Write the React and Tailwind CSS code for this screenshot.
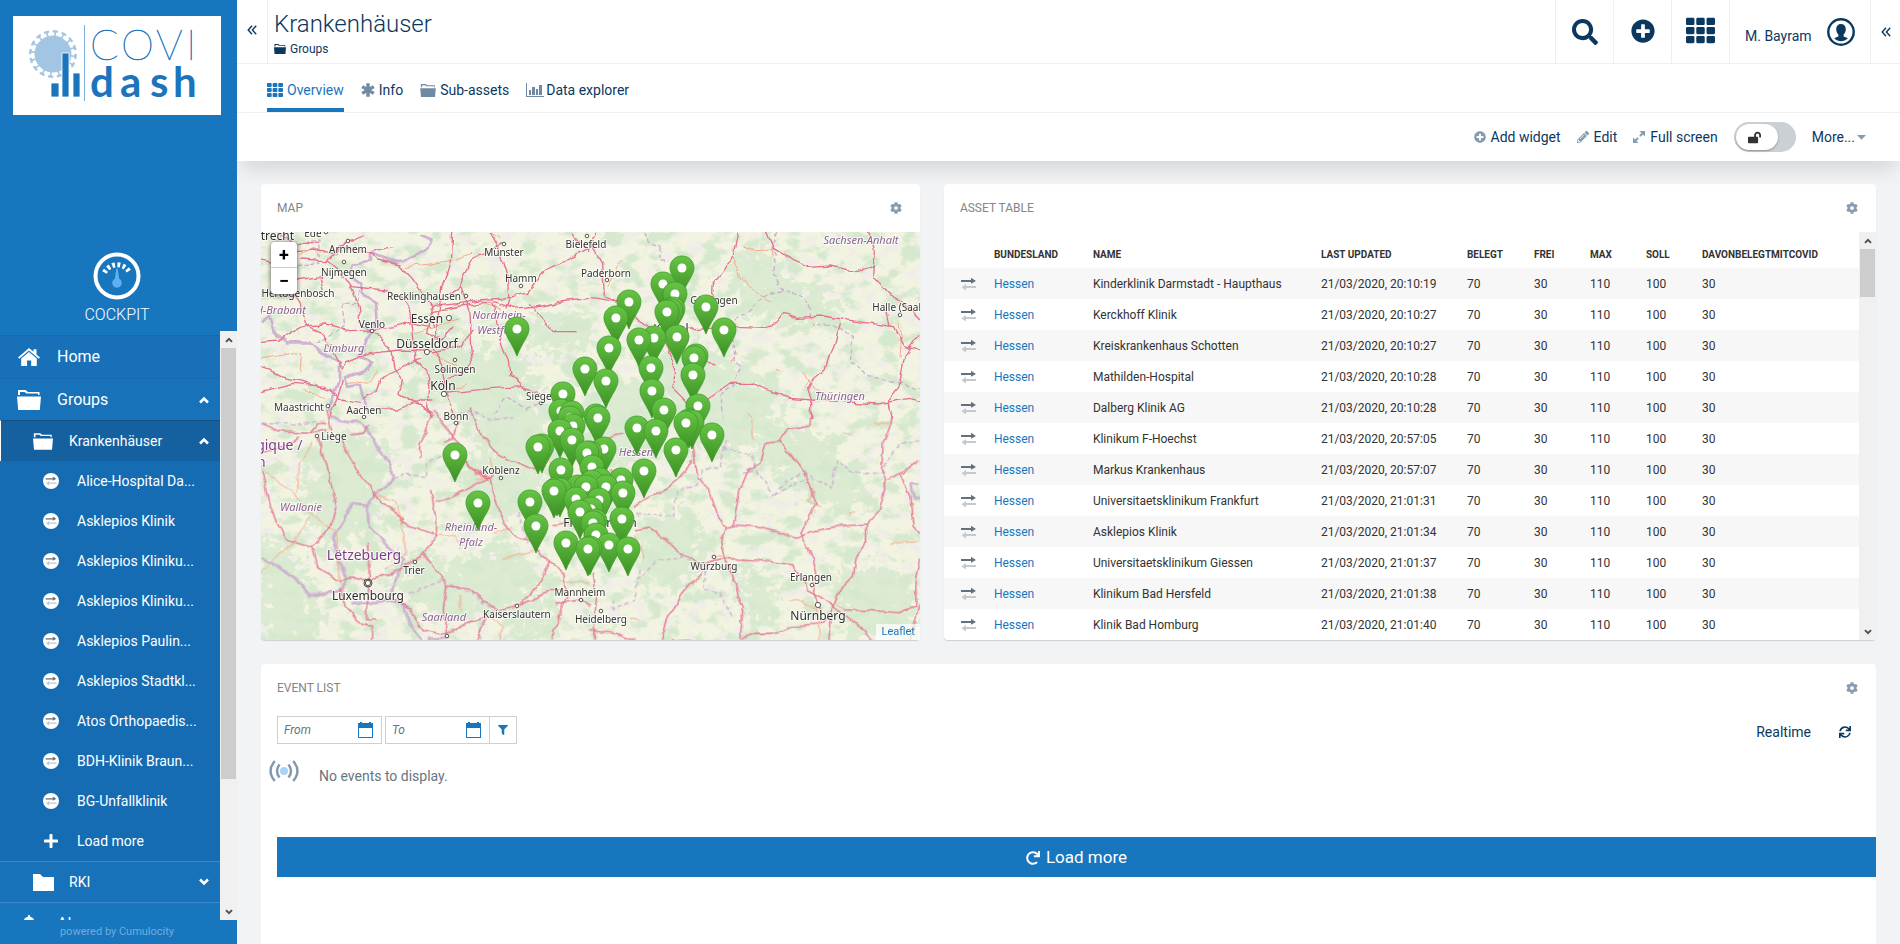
import React from 'react';
import {
  FaSearch, FaPlusCircle, FaTh, FaPencilAlt, FaCog, FaLockOpen,
  FaFilter, FaSync, FaRedo, FaPlus, FaBell,
} from 'react-icons/fa';

const sidebarItems = [
  'Alice-Hospital Da...', 'Asklepios Klinik', 'Asklepios Kliniku...', 'Asklepios Kliniku...', 'Asklepios Paulin...',
  'Asklepios Stadtkl...', 'Atos Orthopaedis...', 'BDH-Klinik Braun...', 'BG-Unfallklinik',
];

const assets = [
  ['Kinderklinik Darmstadt - Haupthaus', '20:10:19'],
  ['Kerckhoff Klinik', '20:10:27'],
  ['Kreiskrankenhaus Schotten', '20:10:27'],
  ['Mathilden-Hospital', '20:10:28'],
  ['Dalberg Klinik AG', '20:10:28'],
  ['Klinikum F-Hoechst', '20:57:05'],
  ['Markus Krankenhaus', '20:57:07'],
  ['Universitaetsklinikum Frankfurt', '21:01:31'],
  ['Asklepios Klinik', '21:01:34'],
  ['Universitaetsklinikum Giessen', '21:01:37'],
  ['Klinikum Bad Hersfeld', '21:01:38'],
  ['Klinik Bad Homburg', '21:01:40'],
];

/* ---------- icons ---------- */

function FolderOpen({ className }) {
  return (
    <svg viewBox="0 0 24 20" className={className} fill="currentColor" aria-hidden="true">
      <path d="M1 0h7.500l2.500 2H22.500v3H21V3.500H9.500L7.500 2H3v3H1z" />
      <path d="M0 6.500h24L22.800 20H1.200z" />
    </svg>
  );
}

function Folder({ className }) {
  return (
    <svg viewBox="0 0 21 17" className={className} fill="currentColor" aria-hidden="true">
      <path d="M0 0h7l3 3h11v14H0z" />
    </svg>
  );
}

function House({ className }) {
  return (
    <svg viewBox="0 0 22 18" className={className} fill="currentColor" aria-hidden="true">
      <path d="M11 0l4.500 3.800V1.200h3v5.200L22 9.400l-1.200 1.400L11 2.600 1.200 10.800 0 9.400z" />
      <path d="M11 4l7.800 6.400V18h-5.600v-5.500H9V18H3.200v-7.600z" />
    </svg>
  );
}

function Chevron({ className }) {
  return (
    <svg viewBox="0 0 10 8" className={className} fill="none" stroke="currentColor" strokeWidth="2.600" aria-hidden="true">
      <path d="M1 6.500l4-4 4 4" />
    </svg>
  );
}

function DoubleLeft({ className }) {
  return (
    <svg viewBox="0 0 10 10" className={className} fill="none" stroke="currentColor" strokeWidth="1.400" aria-hidden="true">
      <path d="M5 .700L1.200 5 5 9.300M9.200 .700L5.400 5l3.800 4.300" />
    </svg>
  );
}

function Asterisk({ className }) {
  return (
    <svg viewBox="0 0 14 14" className={className} stroke="currentColor" strokeWidth="3.400" aria-hidden="true">
      <path d="M7 .300v13.400M1.200 3.650l11.600 6.700M1.200 10.350l11.600-6.700" />
    </svg>
  );
}

function Expand({ className }) {
  return (
    <svg viewBox="0 0 12 12" className={className} aria-hidden="true">
      <path d="M6.500 0H12v5.500zM0 6.500L5.500 12H0z" fill="currentColor" />
      <path d="M10 2L7 5M2 10l3-3" stroke="currentColor" strokeWidth="2" />
    </svg>
  );
}

function Exchange({ className }) {
  return (
    <svg viewBox="0 0 15 14" className={className} aria-hidden="true">
      <path d="M0 3h10V.800L15 4l-5 2.800V5H0z" fill="#62717f" />
      <path d="M15 9H5V7L.500 10.200 5 13.400V11h10z" fill="#c3c9cf" />
    </svg>
  );
}

function BarChart({ className }) {
  return (
    <svg viewBox="0 0 18 14" className={className} fill="currentColor" aria-hidden="true">
      <path d="M0 0h1v13h17v1H0zM3 7h2v5H3zM6 4h3v8H6zM10 6h2v6h-2zM13 2h3v10h-3z" />
    </svg>
  );
}

function Calendar({ className }) {
  return (
    <svg viewBox="0 0 15 16" className={className} fill="currentColor" aria-hidden="true">
      <path fillRule="evenodd" d="M0 1h2V0h2v1h7V0h2v1h2v15H0zM1 6v9h13V6z" />
    </svg>
  );
}

function Cockpit({ className }) {
  return (
    <svg viewBox="0 0 48 48" className={className} aria-hidden="true">
      <circle cx="24" cy="24" r="21.500" fill="none" stroke="#fff" strokeWidth="4" />
      <path d="M11.500 20.500A14 14 0 0 1 36.500 20.500" fill="none" stroke="#fff" strokeWidth="5" strokeDasharray="2.800 2.460" />
      <path d="M23.400 16.500h1.200l1.600 10.200a4.800 4.800 0 1 1-4.400 0z" fill="#5fb0f2" />
    </svg>
  );
}

function UserCircle({ className }) {
  return (
    <svg viewBox="0 0 28 28" className={className} aria-hidden="true">
      <circle cx="14" cy="14" r="12.700" fill="none" stroke="#0b385f" strokeWidth="2.400" />
      <path d="M14 6c3 0 4.800 2 4.800 5.200 0 2.300-.900 4-2.200 5.200v2c1.800.700 3.600 1.200 4.200 2.200A9.500 9.500 0 0 1 14 23.200a9.500 9.500 0 0 1-6.800-2.600c.600-1 2.400-1.500 4.200-2.200v-2c-1.300-1.200-2.200-2.900-2.200-5.200C9.200 8 11 6 14 6z" fill="#0b385f" />
    </svg>
  );
}

function Pulse({ className }) {
  return (
    <svg viewBox="0 0 30 22" className={className} fill="none" stroke="#8298ad" strokeWidth="2.400" aria-hidden="true">
      <circle cx="15" cy="11" r="4" fill="#a9d3f7" stroke="none" />
      <path d="M10.500 4.500q-5 6.500 0 13M5.800 1q-8.500 10 0 20M19.500 4.500q5 6.500 0 13M24.200 1q8.500 10 0 20" />
    </svg>
  );
}

const spikes = Array.from({ length: 16 }, (_, i) => i * 22.5 + 6);

function Logo({ className }) {
  return (
    <svg viewBox="0 0 208 99" className={className} role="img" aria-label="COVI dash">
      <g fill="#a3c5e4" stroke="#a3c5e4">
        <circle cx="40" cy="38" r="18" />
        {spikes.map((a) => (
          <g key={a} transform={`rotate(${a} 40 38)`}>
            <path d="M40 21V15.500" strokeWidth="1.600" />
            <path d="M38.400 15.300h3.200" strokeWidth="2.400" strokeLinecap="round" />
          </g>
        ))}
      </g>
      <path d="M38 67h8v14h-8zM49 37h7v44h-7zM60 57h7v24h-7z" fill="#1a75bd" stroke="#fff" strokeWidth=".8" />
      <path d="M71.500 9v76" stroke="#7fb0da" strokeWidth="1" />
      <text x="77 108 143 173" y="44" fontFamily="Lato, sans-serif" fontWeight="100" fontSize="42" fill="#1a75bd" stroke="#1a75bd" strokeWidth=".5">COVI</text>
      <text x="77 107 137 160" y="81" fontFamily="Lato, sans-serif" fontWeight="700" fontSize="42" fill="#1a75bd">dash</text>
    </svg>
  );
}

/* ---------- scrollbar ---------- */

function Scrollbar({ thumb }) {
  return (
    <div className="flex w-[17px] shrink-0 flex-col items-center bg-[#f0f0f0] text-[#505050]" aria-hidden="true">
      <span className="flex h-[17px] items-center"><Chevron className="h-[6px] w-2" /></span>
      <span className={`w-[15px] bg-[#cdcdcd] ${thumb}`} />
      <span className="mt-auto flex h-[17px] items-center"><Chevron className="h-[6px] w-2 rotate-180" /></span>
    </div>
  );
}

/* ---------- map ---------- */

const tiles = [
  {
    id: 'nw', transform: 'translate(-1 -52) scale(.3333)',
    roads: [
      '578 156 575 230 560 280 545 320 540 372', '3 485 60 480 100 455 135 437 190 435 270 452 330 450 400 440 450 428 510 440',
      '120 240 200 245 210 230 240 200 330 220 350 240 420 255 455 290 490 340 515 380 520 440',
      '205 240 230 260 270 320 295 380 300 430 335 450 375 490 400 530 405 570 425 600',
      '110 215 165 210 230 215 260 185 310 165', '135 437 120 370 100 340 80 300 60 250 3 240',
      '270 320 380 330 430 360 450 400 465 540 480 535', '515 380 600 370 660 360 750 352 800 340 830 300 860 270 900 250 945 230 990 205',
      '690 156 715 200 745 300 750 352 738 385', '570 340 600 320 610 290 640 240 730 190',
      '515 395 600 378 700 365 760 385 850 375 920 360 990 353', '600 320 630 400 635 500 640 540 625 570 600 590 560 595 545 620',
      '700 370 720 480 745 540 750 585 790 620 850 645', '555 640 600 635 700 625 790 620',
      '465 540 500 570 510 620 500 680 520 720', '330 520 420 510 520 515 600 500 640 450', '3 560 60 590 150 610 220 630 240 660 300 670',
      '3 635 100 610 200 620', '250 600 240 640 210 720', '330 520 260 545 250 570 190 460 135 437', '310 655 350 630 360 600 420 570 465 540',
      '360 690 420 690 480 660 520 660', '430 600 420 640 520 700', '930 160 960 190 990 215',
      '540 372 520 500 540 530 560 640 585 700', '805 370 830 400 880 455 950 455', '110 300 180 290 190 330', '515 380 500 460 545 480 580 440',
      '60 160 100 185 180 190', '330 215 400 200',
    ],
    minor: ['430 260 490 255 580 240 640 220', '3 540 60 530 125 515 120 575', '130 630 170 640 200 660', '265 610 330 605 350 570', '690 156 720 180', '460 460 520 440 600 420', '660 360 720 385', '120 225 165 205 180 225', '560 640 620 610', '510 510 550 540 590 560'],
    borders: [
      '480 165 515 180 500 210 440 240 400 245 330 220 330 245 275 255 270 290 300 310 310 340 345 370 350 420 320 480 300 530 335 545 310 575 255 595 265 620 300 615 310 655 325 690',
      '3 430 30 410 45 460 80 490 150 490 200 530 240 545 240 600 225 640 210 680 215 720',
    ],
    states: ['300 330 290 370 245 370 255 440 200 475 160 490', '110 190 180 180 180 250 110 260', '700 700 740 650 800 690 850 670'],
  },
  {
    id: 'ne', transform: 'translate(329 -52) scale(.3333)',
    roads: [
      '440 156 425 235 400 275 370 310 368 340 385 360', '530 156 550 205 600 235 660 262 720 258 800 275 850 262',
      '835 156 853 210 848 290 900 345 935 365 990 420', '270 450 385 440 460 440 520 442 560 430 585 400 620 412 700 408 800 425 910 440 945 500 990 512',
      '990 460 940 530 925 620 893 660 905 720', '750 425 730 490 705 570 650 620 665 660 665 720',
      '310 700 350 660 420 610 490 610 530 630 600 655 665 660 760 665 860 672 960 655 990 665',
      '0 190 35 250 40 350 100 370 160 430 210 470 235 500 250 540 250 620 290 660 310 700', '0 352 60 362 100 370', '300 530 340 545 380 552', '890 390 900 440', '20 156 0 200',
    ],
    minor: ['430 235 450 290 490 330 545 370', '455 195 500 212 545 210 550 230', '645 580 660 610 690 630', '560 565 575 570', '470 700 490 720', '540 180 550 205 530 215', '50 320 100 240', '420 550 440 520', '660 600 640 620', '920 430 935 470 930 530'],
    borders: [],
    states: ['165 160 175 190 210 200 210 240 240 240', '560 156 545 200 560 230 550 280 575 330 640 350 670 430 740 440 790 470 780 550 850 590 920 610 990 625', '575 330 510 360 470 400 440 410 430 480 430 550 450 560 430 610 390 650 400 720'],
  },
  {
    id: 'sw', transform: 'translate(-1 178) scale(.3333)',
    roads: [
      '175 85 200 160 215 230 230 290 210 350 155 410', '3 180 30 290 75 385 155 410 170 470 240 510 330 505 400 490 480 440 530 380 530 320 515 240',
      '3 40 60 65 150 70 200 60', '200 0 215 60', '240 80 260 130 300 190 340 255 400 300 430 340 530 375',
      '490 430 530 480 560 525 620 530 660 560 710 600', '235 540 290 630 335 650 335 690', '320 400 325 500 320 580 320 630 350 630',
      '400 570 450 600 490 660 560 675 620 640 680 625', '630 0 660 70 700 120 770 160 830 180', '500 0 520 20 480 100 475 150',
      '520 0 560 60 600 100 635 180 690 205 710 280 730 340 770 380 830 400', '530 280 590 255 650 220 700 200',
      '830 420 865 450 840 520 800 560 780 585', '865 450 915 490 920 560 890 640 880 690', '710 600 780 585 860 545 920 545',
      '270 75 310 70 330 45', '560 525 550 600 560 675', '680 625 650 690', '150 70 175 40 200 40', '3 125 80 110 120 80', '880 350 960 340 990 350', '890 580 960 570 990 590', '620 150 640 190 690 205', '555 100 580 90 590 30',
    ],
    minor: ['3 170 100 250 150 310 230 370 240 500', '3 490 40 440 100 400 150 320', '430 340 440 430 380 480', '110 250 115 160 160 100', '530 375 580 380 600 400', '730 445 830 420', '340 255 400 270 430 340', '700 370 760 350', '600 555 605 600', '240 500 250 560', '690 620 730 650 720 690', '690 140 700 200 640 210', '860 140 880 180', '900 510 990 520'],
    borders: [
      '215 25 300 40 325 60 350 110 385 150 400 210 340 255 325 285 280 280 220 380 240 450 260 510 240 545 150 560 110 510 40 460 3 440',
      '325 285 330 350 380 410 430 450 400 540 380 570 430 590 450 640 480 690', '280 580 330 575 380 570', '500 690 570 685',
    ],
    states: ['400 210 440 190 500 200 500 160 540 140 590 110', '450 550 550 510 640 550 700 600 660 650 660 690', '3 40 100 45 200 30', '600 10 660 10 700 30 760 20', '780 310 790 340 800 400'],
  },
  {
    id: 'se', transform: 'translate(329 178) scale(.3333)',
    roads: [
      '665 0 660 45 600 55 570 95 525 100 510 160 475 180 450 240 430 345 410 350', '570 95 600 130 640 185 660 230 675 280 630 370 640 385',
      '430 345 500 350 560 365 620 385 660 365 740 350 830 342',
      '905 0 900 50 880 100 875 180 885 240 870 300 830 342 830 400 800 440 790 500 750 540 725 600 720 690',
      '300 0 315 150 320 200 355 240 380 310 410 350 390 390 405 445 430 500 440 550 460 590 450 690',
      '130 360 180 352 230 390 280 440 330 460 405 445 500 450 610 465 640 510 650 540 690 560 730 590 800 640 845 690',
      '340 480 280 550 235 620 215 690', '640 385 665 440 680 490 670 550 690 600', '765 600 850 602 930 608 975 590 975 520 990 440',
      '885 210 930 190 990 150', '930 190 960 260 970 350 990 370', '455 688 500 670 560 670 600 650 690 645 750 605',
      '130 290 170 265 220 240 270 200 310 150', '0 660 60 665 140 690', '10 490 20 560 10 690', '250 690 300 688', '50 90 100 70', '960 690 990 560', '60 180 110 180',
    ],
    minor: ['650 220 670 240 655 275 690 290', '760 70 790 75', '600 570 640 575 680 600 690 690', '780 310 800 305', '130 370 150 410 160 450', '485 30 495 85', '120 630 150 635', '365 435 410 440', '900 400 980 390', '850 40 900 40', '770 600 740 580', '930 610 960 590', '650 400 660 430'],
    borders: ['990 220 965 220 970 260 990 270'],
    states: ['400 115 480 130 500 180 550 250 590 210 640 190 730 235 740 150 790 190 870 185 930 100 990 90', '140 310 250 320 260 250 320 230 340 180 390 170 410 90', '140 510 200 450 280 445 350 480 340 540 400 560 430 620', '70 570 70 600 130 570 150 470', '490 180 460 190', '550 250 650 210'],
  },
];

const forests = [
  'M150 120l40-20 30 20 30-10 20 30-10 50-50 10-40-40z', 'M478 12l30 8 20 30 45 12 4 30-40 8-50-18-20-40z', 'M60 205l50-10 20 40-10 50-40 30-40-30z',
  'M130 320l60 10 60-20 30 30-30 40-70 10-50-40z', 'M410 110l50 10 60 40-20 60-60-10-50-60z', 'M225 145l60 20 10 60-30 30-50-50z',
  'M250 380l30-12 15 20-10 20h-40z', 'M335 150l50 0 10 60-40 30-30-40z', 'M380 290l50-20 20 60-40 30-30-20z', 'M490 190l70 10 50 60-30 20-80-50z', 'M470 345l30-10 20 40-30 20z',
  'M580 330l60 10 19 30v36h-80z', 'M205 220l60 10 20 40-50 20-40-30z', 'M0 300l40 30 20 50-10 28H0z', 'M260 80l60 5 20 20-30 20-40-10z',
];

const labels = [
  [12, 3, 'Utrecht', 'lg'], [52, 1, 'Ede'], [87, 17, 'Arnhem'], [83, 40, 'Nijmegen'], [32, 61, "'s-Hertogenbosch"], [8, 77, 'Noord-Brabant', 'state'],
  [111, 92, 'Venlo'], [83, 115, 'Limburg', 'state'], [163, 64, 'Recklinghausen'], [166, 86, 'Essen', 'lg'], [166, 111, 'Düsseldorf', 'lg'],
  [194, 137, 'Solingen'], [182, 153, 'Köln', 'lg'], [281, 164, 'Siegen'], [38, 175, 'Maastricht'], [103, 178, 'Aachen'], [195, 184, 'Bonn'],
  [243, 20, 'Münster'], [260, 46, 'Hamm'], [238, 82, 'Nordrhein-', 'state'], [240, 97, 'Westfalen', 'state'], [325, 12, 'Bielefeld'], [345, 41, 'Paderborn'],
  [600, 7, 'Sachsen-Anhalt', 'state'], [453, 68, 'Göttingen'], [410, 96, 'Kassel', 'lg'], [640, 75, 'Halle (Saale)'], [579, 163, 'Thüringen', 'state'], [680, 95, 'Leipzig', 'lg'],
  [73, 204, 'Liège'], [8, 212, 'Belgique /', 'country'], [-20, 229, 'Belgien', 'country'], [40, 274, 'Wallonie', 'state'], [240, 238, 'Koblenz'], [210, 294, 'Rheinland-', 'state'], [210, 309, 'Pfalz', 'state'],
  [103, 322, 'Lëtzebuerg', 'country'], [153, 338, 'Trier'], [107, 363, 'Luxembourg', 'lg'], [183, 384, 'Saarland', 'state'], [256, 382, 'Kaiserslautern'],
  [319, 360, 'Mannheim'], [340, 387, 'Heidelberg'], [375, 219, 'Hessen', 'state'], [339, 290, 'Frankfurt am', 'lg'], [453, 334, 'Würzburg'], [550, 345, 'Erlangen'], [557, 383, 'Nürnberg', 'lg'],
];

const labelStyle = {
  md: { fontSize: 10, fill: '#333' },
  lg: { fontSize: 12, fill: '#2d2d2d' },
  state: { fontSize: 11, fill: '#8d6191', fontStyle: 'italic' },
  country: { fontSize: 14, fill: '#7f3c8a' },
};

const towns = [
  [65, 0], [87, 9], [83, 30], [205, 64], [188, 86, 1], [111, 99], [166, 120, 1], [194, 128], [183, 162, 1], [280, 171], [67, 174], [103, 185], [195, 191],
  [243, 12], [260, 54], [326, 4], [346, 48], [639, 83], [56, 204], [240, 246], [154, 330], [107, 351, 1], [256, 374], [320, 368], [340, 379], [453, 325], [551, 353], [557, 373, 1], [186, 404],
];

const pins = [
  [421, 36], [402, 52], [414, 62], [412, 77], [410, 79], [406, 80], [368, 70], [445, 75], [355, 86], [463, 98], [393, 106], [378, 108], [416, 105], [348, 116],
  [435, 124], [433, 126], [390, 136], [432, 143], [324, 137], [345, 149], [391, 159], [437, 174], [403, 178], [335, 184], [337, 186], [376, 196], [395, 199],
  [431, 190], [428, 189], [425, 191], [451, 203], [415, 218], [383, 239], [343, 217], [329, 221], [331, 235], [360, 248], [345, 255], [362, 261], [338, 268], [361, 287],
  [334, 289], [332, 291], [335, 303], [348, 313], [367, 317], [329, 316], [327, 317], [256, 97], [302, 162], [300, 179], [311, 181], [309, 186], [194, 223], [217, 271],
  [281, 214], [277, 215], [299, 199], [312, 194], [311, 208], [326, 221], [300, 238], [317, 255], [299, 258], [296, 257], [293, 259], [269, 270], [275, 294], [315, 267],
  [319, 280], [305, 311], [331, 250], [325, 255], [339, 248], [330, 277],
].sort((a, b) => a[1] - b[1]);

const toPath = (points) => 'M' + points;

function RegionMap() {
  return (
    <svg viewBox="0 0 659 408" preserveAspectRatio="xMidYMid slice" className="absolute inset-0 size-full" fontFamily="'Noto Sans', sans-serif" role="img" aria-label="Map of hospitals">
      <defs>
        <linearGradient id="pinFill" x1="0" x2="0" y1="0" y2="1">
          <stop offset="0" stopColor="#67c545" />
          <stop offset="1" stopColor="#3b8f23" />
        </linearGradient>
        <filter id="woods" x="0" y="0" width="100%" height="100%" colorInterpolationFilters="sRGB">
          <feTurbulence type="fractalNoise" baseFrequency=".05 .07" numOctaves="6" seed="8" />
          <feColorMatrix values="0 0 0 0 .84  0 0 0 0 .915  0 0 0 0 .81  6 0 0 0 -3" />
        </filter>
        <filter id="fields" x="0" y="0" width="100%" height="100%" colorInterpolationFilters="sRGB">
          <feTurbulence type="fractalNoise" baseFrequency=".07 .09" numOctaves="4" seed="21" />
          <feColorMatrix values="0 0 0 0 .94  0 0 0 0 .93  0 0 0 0 .91  0 5 0 0 -2.500" />
        </filter>
        <filter id="rough" x="-5%" y="-5%" width="110%" height="110%">
          <feTurbulence type="fractalNoise" baseFrequency=".06" numOctaves="3" seed="3" />
          <feDisplacementMap in="SourceGraphic" scale="7" xChannelSelector="R" yChannelSelector="G" />
        </filter>
        <filter id="roughWoods" x="-10%" y="-10%" width="120%" height="120%">
          <feTurbulence type="fractalNoise" baseFrequency=".1" numOctaves="5" seed="5" />
          <feDisplacementMap in="SourceGraphic" scale="60" xChannelSelector="R" yChannelSelector="G" />
        </filter>
        <g id="pin">
          <path d="M0-12C7-12 12-7 12 0c0 7-7 14-12 27C-5 14-12 7-12 0-12-7-7-12 0-12z" fill="url(#pinFill)" stroke="#3f9a2b" strokeWidth=".8" />
          <circle r="4.500" fill="#fff" />
        </g>
      </defs>
      <rect width="659" height="408" fill="#f2f3e0" />
      <rect width="659" height="408" filter="url(#fields)" />
      <g fill="#cfe7c8" opacity=".6" filter="url(#roughWoods)">
        {forests.map((d) => <path key={d} d={d} />)}
      </g>
      <rect width="659" height="408" filter="url(#woods)" />
      <g fill="none" strokeLinejoin="round" filter="url(#rough)">
        {tiles.map((tile) => (
          <g key={tile.id} transform={tile.transform}>
            <g stroke="#cba6cf" strokeWidth="8" opacity=".85">{tile.borders.map((p) => <path key={p} d={toPath(p)} />)}</g>
            <g stroke="#cbb0cf" strokeWidth="4" strokeDasharray="14 8">{tile.states.map((p) => <path key={p} d={toPath(p)} />)}</g>
            <g stroke="#f7a98c" strokeWidth="3">{tile.minor.map((p) => <path key={p} d={toPath(p)} />)}</g>
            <g stroke="#e6718f" strokeWidth="4">{tile.roads.map((p) => <path key={p} d={toPath(p)} />)}</g>
          </g>
        ))}
      </g>
      <g fill="#fff" stroke="#555">
        {towns.map(([x, y, big]) => <circle key={`${x}-${y}`} cx={x} cy={y} r={big ? 2.6 : 1.8} />)}
      </g>
      <circle cx="107" cy="351" r="4" fill="none" stroke="#444" />
      <g textAnchor="middle" dominantBaseline="central" paintOrder="stroke" stroke="#fff" strokeOpacity=".7" strokeWidth="2">
        {labels.map(([x, y, text, kind = 'md']) => <text key={text} x={x} y={y} {...labelStyle[kind]}>{text}</text>)}
      </g>
      {pins.map(([x, y]) => <use key={`${x}-${y}`} href="#pin" x={x} y={y} />)}
    </svg>
  );
}

/* ---------- layout pieces ---------- */

function Sidebar() {
  return (
    <aside className="relative z-20 flex w-[237px] shrink-0 flex-col bg-[#1876bf] text-white">
      <Logo className="mx-[13px] mt-4 h-[99px] w-[208px] bg-white" />
      <div className="mt-[137px] flex h-[79px] w-[234px] flex-col items-center">
        <Cockpit className="size-12" />
        <span className="mt-[3px] text-base font-light">COCKPIT</span>
      </div>
      <div className="flex min-h-0 flex-1">
        <nav className="min-w-0 flex-1 overflow-hidden pt-1">
          <a href="#home" className="flex h-[43px] items-center border-t border-[#1669ab] bg-[#1871b8] pl-[18px]">
            <House className="h-[18px] w-[22px]" />
            <span className="ml-[17px] text-base">Home</span>
          </a>
          <a href="#groups" className="flex h-[42px] items-center border-t border-[#1669ab] bg-[#1872b9] pr-[11px] pl-[17px]">
            <FolderOpen className="h-5 w-6" />
            <span className="ml-4 flex-1 text-base">Groups</span>
            <Chevron className="h-2 w-[10px]" />
          </a>
          <a href="#krankenhaeuser" className="flex h-[41px] items-center border-t border-l border-t-[#114f85] border-l-white bg-[#1561a0] pr-[11px] pl-8 text-sm">
            <FolderOpen className="h-[17px] w-5" />
            <span className="ml-4 flex-1">Krankenhäuser</span>
            <Chevron className="h-2 w-[10px]" />
          </a>
          <ul className="bg-[#166cb3] text-sm">
            {sidebarItems.map((name, i) => (
              <li key={i}>
                <a href="#asset" className="flex h-10 items-center pl-[43px]">
                  <span className="flex size-4 items-center justify-center rounded-full bg-white"><Exchange className="h-[10px] w-3" /></span>
                  <span className="ml-[18px]">{name}</span>
                </a>
              </li>
            ))}
            <li>
              <button className="flex h-10 w-full items-center pl-[43px]">
                <FaPlus className="size-4" />
                <span className="ml-[18px]">Load more</span>
              </button>
            </li>
          </ul>
          <a href="#rki" className="flex h-[41px] items-center border-t border-[#3b8bcc] bg-[#1872b9] pr-[11px] pl-[33px] text-sm">
            <Folder className="h-[17px] w-[21px]" />
            <span className="ml-[15px] flex-1">RKI</span>
            <Chevron className="h-2 w-[10px] rotate-180" />
          </a>
          <a href="#alarms" className="flex h-[43px] items-center border-t border-[#3b8bcc] bg-[#1876bf] pl-5">
            <FaBell className="size-[18px]" />
            <span className="ml-[19px] text-base">Alarms</span>
          </a>
        </nav>
        <Scrollbar thumb="h-[431px]" />
      </div>
      <footer className="flex h-6 w-[234px] items-center justify-center text-[11px] text-[#70addb]">powered by Cumulocity</footer>
    </aside>
  );
}

function Header() {
  return (
    <header className="flex h-16 border-b border-[#eeeff0] text-[#0b385f]">
      <button aria-label="Collapse navigator" className="flex w-[31px] items-center justify-center border-r border-[#eeeff0] pb-1"><DoubleLeft className="size-[10px]" /></button>
      <div className="flex flex-1 flex-col pt-2 pl-[6px]">
        <h1 className="text-2xl leading-8 font-light">Krankenhäuser</h1>
        <a href="#groups" className="flex items-center gap-1 text-xs leading-[18px]"><FolderOpen className="h-[10px] w-3" />Groups</a>
      </div>
      <button aria-label="Search" className="flex w-[58px] items-center justify-center border-l border-[#eeeff0]"><FaSearch className="size-[26px]" /></button>
      <button aria-label="Add" className="flex w-[58px] items-center justify-center border-l border-[#eeeff0] pb-[2px]"><FaPlusCircle className="size-6" /></button>
      <button aria-label="Applications" className="flex w-[58px] items-center justify-center border-l border-[#eeeff0] pb-[2px]"><FaTh className="size-[29px]" /></button>
      <button className="flex w-[141px] items-center justify-between border-l border-[#eeeff0] pr-[15px] pl-[15px] text-sm">
        <span className="pt-2">M. Bayram</span>
        <UserCircle className="size-7" />
      </button>
      <button aria-label="Open drawer" className="flex w-[30px] items-center justify-center border-l border-[#eeeff0]"><DoubleLeft className="size-[10px]" /></button>
    </header>
  );
}

function Tabs() {
  return (
    <nav className="flex h-[49px] gap-[17px] border-b border-[#eeeff0] pl-[30px] text-sm text-[#0b385f]">
      <a href="#overview" className="flex items-center gap-1 border-b-4 border-[#1876bf] pt-2 text-[#1876bf]"><FaTh className="size-4" />Overview</a>
      <a href="#info" className="flex items-center gap-1 pt-1"><Asterisk className="size-[14px] text-[#6f8aa3]" />Info</a>
      <a href="#sub-assets" className="flex items-center gap-1 pt-1"><FolderOpen className="h-[13px] w-4 text-[#6f8aa3]" />Sub-assets</a>
      <a href="#data" className="flex items-center gap-[2px] pt-1"><BarChart className="h-[14px] w-[18px] text-[#6f8aa3]" />Data explorer</a>
    </nav>
  );
}

function ActionBar() {
  return (
    <div className="relative z-10 flex h-12 items-center justify-end bg-white pr-[34px] text-sm text-[#0b385f] shadow-[0_12px_20px_-4px_rgba(0,0,0,0.12)]">
      <button className="mr-4 flex items-center gap-[5px]"><FaPlusCircle className="size-3 text-[#869db1]" />Add widget</button>
      <button className="mr-4 flex items-center gap-[5px]"><FaPencilAlt className="size-3 text-[#869db1]" />Edit</button>
      <button className="mr-4 flex items-center gap-[5px]"><Expand className="size-3 text-[#869db1]" />Full screen</button>
      <label className="mr-4 flex h-[30px] w-[62px] items-center rounded-full bg-[#cbd0d5] p-[2px]">
        <input type="checkbox" aria-label="Lock dashboard" className="sr-only" />
        <span className="flex h-[26px] w-[42px] items-center justify-center rounded-full bg-white pr-[5px] text-[#333] shadow-[0_1px_2px_rgba(0,0,0,0.3)]"><FaLockOpen className="size-[13px]" /></span>
      </label>
      <button className="flex items-center gap-[2px]">
        More...
        <svg viewBox="0 0 9 5" className="h-[5px] w-[9px] text-[#869db1]" fill="currentColor" aria-hidden="true"><path d="M0 0h9L4.500 4.800z" /></svg>
      </button>
    </div>
  );
}

function CardHeader({ title }) {
  return (
    <div className="flex h-12 shrink-0 items-center justify-between pr-[18px] pl-4">
      <h2 className="text-xs text-[#858585]">{title}</h2>
      <button aria-label={`${title} settings`}><FaCog className="size-3 text-[#869db1]" /></button>
    </div>
  );
}

function MapCard() {
  return (
    <section className="col-span-5 flex flex-col rounded-sm bg-white shadow-[0_1px_1px_rgba(0,0,0,0.15)]">
      <CardHeader title="MAP" />
      <div className="relative h-[408px] overflow-hidden">
        <RegionMap />
        <div className="absolute top-[10px] left-[10px] flex w-[26px] flex-col rounded-[4px] bg-white text-lg leading-[26px] font-bold text-black shadow-[0_1px_5px_rgba(0,0,0,0.65)]">
          <button aria-label="Zoom in" className="flex h-[26px] items-center justify-center border-b border-[#ccc]">+</button>
          <button aria-label="Zoom out" className="flex h-[26px] items-center justify-center">−</button>
        </div>
        <a href="#leaflet" className="absolute right-0 bottom-0 bg-white/70 px-[5px] text-[11px] leading-4 text-[#1876bf]">Leaflet</a>
      </div>
    </section>
  );
}

function AssetCard() {
  const cell = 'p-0 text-left whitespace-nowrap';
  return (
    <section className="col-span-7 flex flex-col rounded-sm bg-white shadow-[0_1px_1px_rgba(0,0,0,0.15)]">
      <CardHeader title="ASSET TABLE" />
      <div className="flex h-[408px] overflow-hidden">
        <div className="min-w-0 flex-1 overflow-hidden">
          <table className="w-full table-fixed border-collapse text-xs text-[#333]">
            <colgroup>
              <col className="w-[50px]" /><col className="w-[99px]" /><col className="w-[228px]" /><col className="w-[146px]" />
              <col className="w-[67px]" /><col className="w-[56px]" /><col className="w-[56px]" /><col className="w-[56px]" /><col />
            </colgroup>
            <thead>
              <tr className="h-9 text-[10px]">
                <th className={cell}><span className="sr-only">Status</span></th>
                {['BUNDESLAND', 'NAME', 'LAST UPDATED', 'BELEGT', 'FREI', 'MAX', 'SOLL', 'DAVONBELEGTMITCOVID'].map((h) => (
                  <th key={h} className={`${cell} pt-[10px] font-bold`}>{h}</th>
                ))}
              </tr>
            </thead>
            <tbody>
              {assets.map(([name, time]) => (
                <tr key={name} className="h-[31px] odd:bg-[#f7f7f7]">
                  <td className="p-0 pl-[17px]"><Exchange className="h-[14px] w-[15px]" /></td>
                  <td className={cell}><a href="#hessen" className="text-[#1876bf]">Hessen</a></td>
                  <td className={cell}>{name}</td>
                  <td className={cell}>21/03/2020, {time}</td>
                  <td className={cell}>70</td>
                  <td className={cell}>30</td>
                  <td className={cell}>110</td>
                  <td className={cell}>100</td>
                  <td className={cell}>30</td>
                </tr>
              ))}
            </tbody>
          </table>
        </div>
        <Scrollbar thumb="h-12" />
      </div>
    </section>
  );
}

function DateField({ label }) {
  return (
    <div className="flex h-7 w-[105px] items-center border border-[#ccd0d4] pr-2 pl-[6px]">
      <input type="text" aria-label={label} placeholder={label} className="min-w-0 flex-1 text-xs italic outline-none placeholder:text-[#66757f]" />
      <button aria-label={`Pick ${label} date`} className="text-[#1876bf]"><Calendar className="h-4 w-[15px]" /></button>
    </div>
  );
}

function EventCard() {
  return (
    <section className="mt-6 flex flex-1 flex-col rounded-t-sm bg-white">
      <CardHeader title="EVENT LIST" />
      <div className="flex items-start pt-1 pl-4">
        <DateField label="From" />
        <div className="ml-[3px] flex">
          <DateField label="To" />
          <button aria-label="Filter" className="-ml-px flex h-7 w-7 items-center justify-center border border-[#ccd0d4] text-[#1876bf]"><FaFilter className="size-[10px]" /></button>
        </div>
        <div className="ml-auto flex items-center gap-7 pt-[6px] pr-[25px] text-sm text-[#0b385f]">
          <span>Realtime</span>
          <button aria-label="Refresh"><FaSync className="size-3" /></button>
        </div>
      </div>
      <div className="mt-4 flex items-start pl-2">
        <Pulse className="h-[22px] w-[30px]" />
        <p className="ml-5 pt-[6px] text-sm text-[#66757f]">No events to display.</p>
      </div>
      <button className="mt-[51px] ml-4 flex h-10 items-center justify-center gap-[6px] bg-[#1876bf] pt-[2px] text-[17px] text-white"><FaRedo className="size-[14px]" />Load more</button>
    </section>
  );
}

export default function App() {
  return (
    <div className="flex h-screen overflow-hidden bg-[#f1f3f5] font-['Roboto',sans-serif]">
      <Sidebar />
      <main className="flex min-w-0 flex-1 flex-col">
        <div className="shrink-0 bg-white">
          <Header />
          <Tabs />
          <ActionBar />
        </div>
        <div className="flex flex-1 flex-col px-6 pt-[23px]">
          <div className="grid grid-cols-12 gap-6">
            <MapCard />
            <AssetCard />
          </div>
          <EventCard />
        </div>
      </main>
    </div>
  );
}
